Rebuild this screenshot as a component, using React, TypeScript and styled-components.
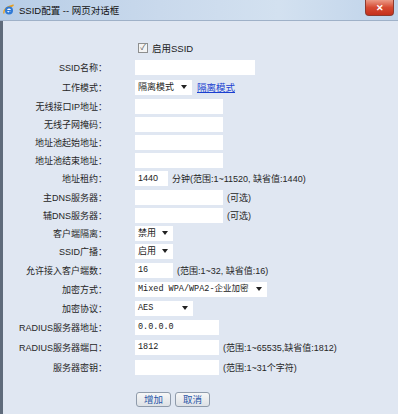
import styled, { createGlobalStyle } from 'styled-components'

const GlobalStyle = createGlobalStyle`
  html, body {
    margin: 0;
    padding: 0;
    background: #e0e7f2;
  }
`

const SANS = `"Liberation Sans", "Noto Sans CJK SC", sans-serif`
const MONO = `"Liberation Mono", "Noto Sans CJK SC", monospace`

type Field =
  | { kind: 'input'; w: number; value?: string; mono?: boolean; hint?: string }
  | { kind: 'select'; w: number; value: string; mono?: boolean; link?: string }

interface RowDef {
  label: string
  h: number
  field: Field
}

const rows: RowDef[] = [
  { label: 'SSID名称：', h: 20, field: { kind: 'input', w: 120 } },
  { label: '工作模式：', h: 20, field: { kind: 'select', w: 57, value: '隔离模式', link: '隔离模式' } },
  { label: '无线接口IP地址：', h: 19, field: { kind: 'input', w: 88 } },
  { label: '无线子网掩码：', h: 17, field: { kind: 'input', w: 88 } },
  { label: '地址池起始地址：', h: 18, field: { kind: 'input', w: 88 } },
  { label: '地址池结束地址：', h: 18, field: { kind: 'input', w: 88 } },
  { label: '地址租约：', h: 19, field: { kind: 'input', w: 33, value: '1440', hint: '分钟(范围:1~11520, 缺省值:1440)' } },
  { label: '主DNS服务器：', h: 18, field: { kind: 'input', w: 88, hint: '(可选)' } },
  { label: '辅DNS服务器：', h: 18, field: { kind: 'input', w: 88, hint: '(可选)' } },
  { label: '客户端隔离：', h: 18, field: { kind: 'select', w: 38, value: '禁用' } },
  { label: 'SSID广播：', h: 18, field: { kind: 'select', w: 38, value: '启用' } },
  { label: '允许接入客户端数：', h: 20, field: { kind: 'input', w: 38, value: '16', mono: true, hint: '(范围:1~32, 缺省值:16)' } },
  { label: '加密方式：', h: 18, field: { kind: 'select', w: 132, value: 'Mixed WPA/WPA2-企业加密', mono: true } },
  { label: '加密协议：', h: 20, field: { kind: 'select', w: 58, value: 'AES', mono: true } },
  { label: 'RADIUS服务器地址：', h: 19, field: { kind: 'input', w: 84, value: '0.0.0.0', mono: true } },
  { label: 'RADIUS服务器端口：', h: 20, field: { kind: 'input', w: 84, value: '1812', mono: true, hint: '(范围:1~65535,缺省值:1812)' } },
  { label: '服务器密钥：', h: 20, field: { kind: 'input', w: 84, hint: '(范围:1~31个字符)' } },
]

const IeIcon = () => (
  <svg width="12" height="12" viewBox="0 0 12 12">
    <path d="M1 9.5 C0 6 4 2 10.5 1.2 C8 2.5 6 4 4.5 6" fill="none" stroke="#e8a020" strokeWidth="1.3" />
    <circle cx="6" cy="6.5" r="4" fill="#2f7ad6" />
    <circle cx="6" cy="6.5" r="2" fill="#fff" />
    <rect x="3.5" y="6" width="5" height="1.1" fill="#2f7ad6" />
    <rect x="6" y="7.4" width="3" height="1.6" fill="#2f7ad6" />
  </svg>
)

const Arrow = () => (
  <svg width="6" height="4" viewBox="0 0 6 4">
    <path d="M0 0 H6 L3 4 Z" fill="#222" />
  </svg>
)

const App = (): JSX.Element => {
  return (
    <>
      <GlobalStyle />
      <Window>
        <TitleBar>
          <IeIcon />
          <Title>SSID配置 -- 网页对话框</Title>
          <CloseBtn>✕</CloseBtn>
        </TitleBar>
        <Body>
          <Row $h={18}>
            <Label />
            <Cell>
              <CheckBox>✓</CheckBox>
              <CheckText>启用SSID</CheckText>
            </Cell>
          </Row>
          {rows.map((r) => (
            <Row key={r.label} $h={r.h}>
              <Label>{r.label}</Label>
              <Cell>
                {r.field.kind === 'input' ? (
                  <>
                    <Box $w={r.field.w} $mono={r.field.mono}>
                      {r.field.value}
                    </Box>
                    {r.field.hint && <Hint>{r.field.hint}</Hint>}
                  </>
                ) : (
                  <>
                    <SelectBox $w={r.field.w} $mono={r.field.mono}>
                      <span>{r.field.value}</span>
                      <Arrow />
                    </SelectBox>
                    {r.field.link && <Link>{r.field.link}</Link>}
                  </>
                )}
              </Cell>
            </Row>
          ))}
          <Buttons>
            <Btn>增加</Btn>
            <Btn>取消</Btn>
          </Buttons>
        </Body>
      </Window>
    </>
  )
}

const Window = styled.div`
  width: 398px;
  height: 414px;
  display: flex;
  flex-direction: column;
  overflow: hidden;
  font-family: ${SANS};
  font-size: 9px;
  color: #262626;
`

const TitleBar = styled.div`
  height: 20px;
  flex: none;
  display: flex;
  align-items: center;
  gap: 4px;
  padding-left: 3px;
  background: linear-gradient(90deg, #b7cde6 0%, #c9d9ec 40%, #d3e1f0 70%, #bfd3ea 100%);
  border-bottom: 1px solid #9fb1c8;
  position: relative;
`

const Title = styled.span`
  font-size: 9.5px;
  color: #111;
`

const CloseBtn = styled.div`
  position: absolute;
  right: 4px;
  top: 0;
  width: 29px;
  height: 16px;
  border-radius: 0 0 4px 4px;
  background: linear-gradient(180deg, #eb9a86 0%, #d64a32 50%, #c4301c 100%);
  border: 1px solid #8d3a2e;
  border-top: none;
  box-sizing: border-box;
  color: #fff;
  font-size: 9px;
  font-weight: bold;
  display: grid;
  place-items: center;
`

const Body = styled.div`
  flex: 1;
  padding-top: 18px;
  border-left: 3px solid #5f6b7b;
  background: #e0e7f2;
`

const Row = styled.div<{ $h: number }>`
  height: ${(p) => p.$h}px;
  display: flex;
  align-items: center;
`

const Label = styled.div`
  width: 104px;
  flex: none;
  text-align: right;
  white-space: nowrap;
`

const Cell = styled.div`
  margin-left: 28px;
  display: flex;
  align-items: center;
  gap: 4px;
`

const CheckBox = styled.span`
  width: 8px;
  height: 8px;
  border: 1px solid #8e8f8f;
  background: #f4f4f4;
  color: #555;
  font-size: 8px;
  line-height: 8px;
  text-align: center;
  margin-left: 3px;
`

const CheckText = styled.span`
  font-size: 9.5px;
  color: #222;
`

const Box = styled.div<{ $w: number; $mono?: boolean }>`
  width: ${(p) => p.$w}px;
  height: 15px;
  background: #fff;
  box-sizing: border-box;
  padding-left: 3px;
  line-height: 15px;
  white-space: nowrap;
  overflow: hidden;
  font-family: ${(p) => (p.$mono ? MONO : SANS)};
  font-size: ${(p) => (p.$mono ? '8.5px' : '9px')};
  color: #222;
`

const SelectBox = styled(Box)`
  display: flex;
  align-items: center;
  justify-content: space-between;
  padding-right: 5px;
`

const Link = styled.a`
  color: #1a3fd0;
  text-decoration: underline;
  font-size: 9.5px;
  margin-left: 1px;
`

const Hint = styled.span`
  white-space: nowrap;
`

const Buttons = styled.div`
  margin-top: 15px;
  margin-left: 133px;
  display: flex;
  gap: 4px;
`

const Btn = styled.button`
  width: 35px;
  height: 15px;
  padding: 0;
  border: 1px solid #8f9bab;
  border-radius: 3px;
  background: linear-gradient(180deg, #f7f7f7 0%, #dde1e6 100%);
  color: #2755a8;
  font-family: ${SANS};
  font-size: 9.5px;
  line-height: 13px;
`

export default App
